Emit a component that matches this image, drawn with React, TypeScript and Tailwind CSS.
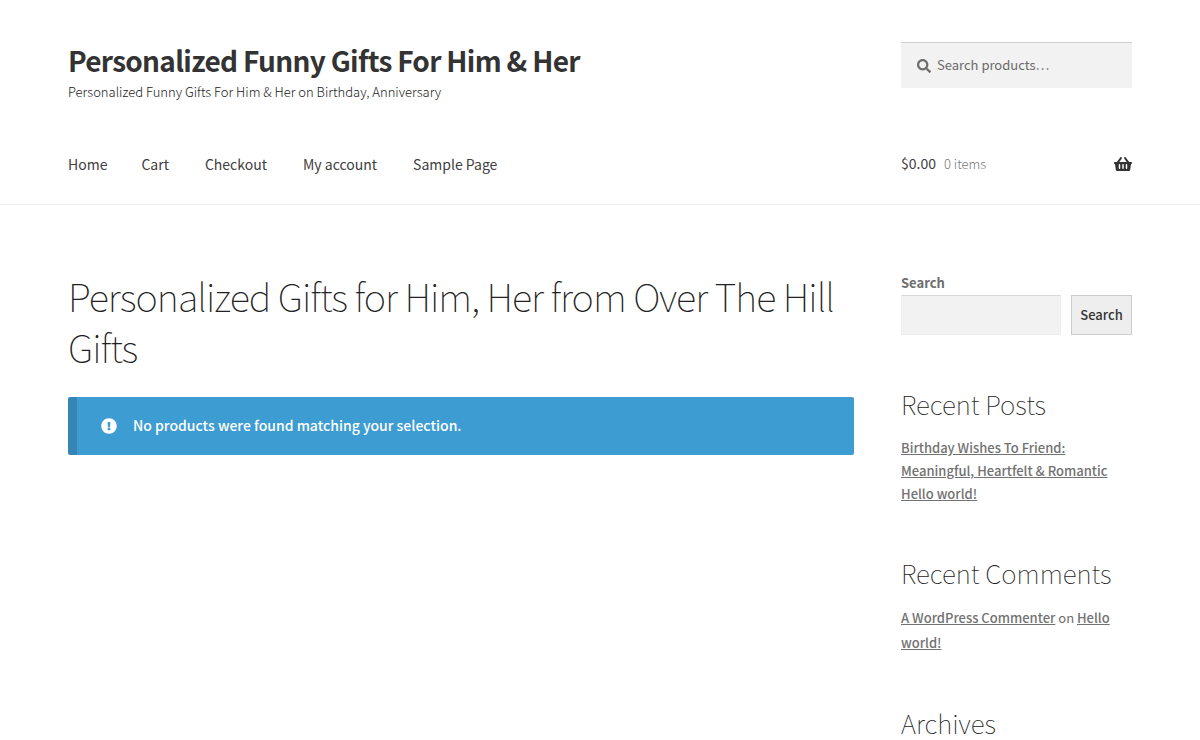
import type { ReactNode } from 'react';
import { FaExclamationCircle, FaSearch, FaShoppingBasket } from 'react-icons/fa';

const navItems = ['Home', 'Cart', 'Checkout', 'My account', 'Sample Page'];

const recentPosts = ['Birthday Wishes To Friend: Meaningful, Heartfelt & Romantic', 'Hello world!'];

type WidgetProps = {
  title: string;
  children?: ReactNode;
};

function Widget({ title, children }: WidgetProps) {
  return (
    <section>
      <h2 className="mb-4 text-[26px] font-thin leading-8 text-[#222222]">{title}</h2>
      {children}
    </section>
  );
}

function TextLink({ children }: { children: ReactNode }) {
  return (
    <a href="#" className="font-medium text-[#727272] underline">
      {children}
    </a>
  );
}

function Header() {
  return (
    <header className="border-b border-[#eeeeee] px-6 pt-[42px] pb-7">
      <div className="mx-auto max-w-[1064px]">
        <div className="flex items-start justify-between gap-12">
          <div>
            <p className="text-[28px] font-bold leading-9 tracking-tight text-[#333333]">
              <a href="#">Personalized Funny Gifts For Him &amp; Her</a>
            </p>
            <p className="pt-1 text-[13px] font-light leading-5 text-[#222222]">
              Personalized Funny Gifts For Him &amp; Her on Birthday, Anniversary
            </p>
          </div>
          <form role="search" className="flex h-[46px] w-[231px] shrink-0 items-center gap-1.5 border-t border-[#d0d0d0] bg-[#f2f2f2] px-4">
            <FaSearch className="shrink-0 text-[14px] text-[#6d6d6d]" aria-hidden="true" />
            <input
              type="search"
              placeholder="Search products…"
              aria-label="Search products"
              className="h-full min-w-0 flex-1 bg-transparent pb-0.5 text-[13px] text-[#43454b] outline-none placeholder:text-[#6a6a6a]"
            />
          </form>
        </div>
        <div className="mt-[49px] flex items-center justify-between gap-12 leading-6">
          <nav className="flex gap-9 text-[14px] text-[#404040]">
            {navItems.map((item) => (
              <a key={item} href="#" className="first:-mr-0.5">
                {item}
              </a>
            ))}
          </nav>
          <a href="#" className="flex w-[231px] shrink-0 items-baseline gap-2 text-[14px] text-[#404040]">
            <span>$0.00</span>
            <span className="text-[13px] font-light text-[#777777]">0 items</span>
            <FaShoppingBasket className="ml-auto self-center text-[18px] text-[#333333]" aria-hidden="true" />
          </a>
        </div>
      </div>
    </header>
  );
}

function Sidebar() {
  return (
    <aside className="w-[231px] shrink-0 pt-px text-[13px] text-[#6d6d6d]">
      <form role="search" className="mb-[53px]">
        <label htmlFor="sidebar-search" className="block font-bold leading-6">
          Search
        </label>
        <div className="flex h-10 gap-2.5">
          <input
            id="sidebar-search"
            type="search"
            className="min-w-0 flex-1 border border-[#eeeeee] border-t-[#d8d8d8] bg-[#f2f2f2] px-2 outline-none"
          />
          <button type="submit" className="w-[61px] border border-[#cccccc] bg-[#eeeeee] font-medium text-[#333333]">
            Search
          </button>
        </div>
      </form>
      <div className="flex flex-col gap-[52px]">
        <Widget title="Recent Posts">
          <ul className="leading-[23px]">
            {recentPosts.map((post) => (
              <li key={post}>
                <TextLink>{post}</TextLink>
              </li>
            ))}
          </ul>
        </Widget>
        <Widget title="Recent Comments">
          <p className="leading-[25px]">
            <TextLink>A WordPress Commenter</TextLink> on <TextLink>Hello world!</TextLink>
          </p>
        </Widget>
        <Widget title="Archives" />
      </div>
    </aside>
  );
}

export default function App() {
  return (
    <div className="bg-white font-['Noto_Sans_CJK_SC','Noto_Sans',sans-serif]">
      <Header />
      <div className="px-6">
        <div className="mx-auto flex max-w-[1064px] items-start gap-[47px] pt-[65px]">
          <main className="min-w-0 flex-1">
            <h1 className="mb-[25px] text-[38px] font-thin leading-[51px] tracking-tight text-[#222222]">
              Personalized Gifts for Him, Her from Over The Hill Gifts
            </h1>
            <div
              role="status"
              className="flex h-[58px] items-center gap-4 rounded-xs border-l-9 border-[#3585b5] bg-[#3d9cd2] px-6 text-[14px] font-medium text-white"
            >
              <FaExclamationCircle className="shrink-0 text-[16px]" aria-hidden="true" />
              <span className="pb-0.5">No products were found matching your selection.</span>
            </div>
          </main>
          <Sidebar />
        </div>
      </div>
    </div>
  );
}
